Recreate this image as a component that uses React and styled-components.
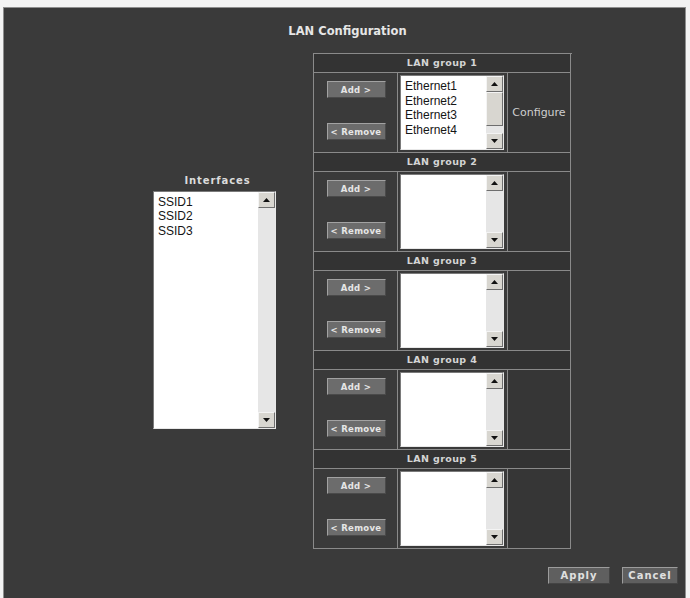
import React from 'react';
import styled, { createGlobalStyle } from 'styled-components';

const GlobalStyle = createGlobalStyle`
    body {
        margin: 0;
        background: #f3f3f3;
        font-family: "DejaVu Sans", Verdana, sans-serif;
    }
`;

const Page = styled.div`
    height: 598px;
    box-sizing: border-box;
    padding: 7px 4px 0 3px;
`;

const Panel = styled.div`
    height: 591px;
    box-sizing: border-box;
    display: flex;
    flex-direction: column;
    background: #3a3a3a;
    border: 1px solid #8e8e8e;
    border-bottom: none;
`;

const Title = styled.div`
    padding: 16px 0 0 6px;
    text-align: center;
    font-size: 11.5px;
    line-height: 14px;
    font-weight: bold;
    color: #e6e6e6;
`;

const Content = styled.div`
    display: flex;
    align-items: center;
    gap: 37px;
    margin-top: 15px;
    padding-left: 149px;
`;

const InterfaceColumn = styled.div`
    display: flex;
    flex-direction: column;
    align-items: center;
    width: 123px;
`;

const Label = styled.div`
    font-size: 10px;
    line-height: 14px;
    font-weight: bold;
    letter-spacing: 0.9px;
    color: #dcdcdc;
    margin: 0 0 3px 6px;
`;

const ListBox = styled.div`
    display: flex;
    box-sizing: border-box;
    width: ${p => p.$width}px;
    height: ${p => p.$height}px;
    background: #fff;
    border: 1px solid;
    border-color: #7a7a7a #e8e8e8 #e8e8e8 #7a7a7a;
`;

const Items = styled.div`
    flex: 1;
    padding: 3px 0 0 4px;
    font-family: "Liberation Sans", Arial, sans-serif;
    font-size: 12px;
    line-height: 14.5px;
    color: #151515;
    overflow: hidden;
`;

const ScrollBar = styled.div`
    display: flex;
    flex-direction: column;
    width: 17px;
    background: #e6e6e6;
`;

const Bevel = styled.div`
    box-sizing: border-box;
    background: #d8d6d0;
    border: 1px solid;
    border-color: #f4f4f4 #6e6e6e #6e6e6e #f4f4f4;
`;

const ArrowButton = styled(Bevel)`
    height: 16px;
    display: flex;
    align-items: center;
    justify-content: center;
`;

const Thumb = styled(Bevel)`
    height: ${p => p.$size}px;
`;

const Track = styled.div`
    flex: 1;
`;

const GroupTable = styled.div`
    width: 258px;
    border-top: 1px solid #8a8a8a;
    border-left: 1px solid #8a8a8a;
`;

const Group = styled.div`
    display: grid;
    grid-template-columns: 84px 110px 63px;
    grid-template-rows: 19px 80px;

    & > * {
        box-sizing: border-box;
        border-right: 1px solid #8a8a8a;
        border-bottom: 1px solid #8a8a8a;
    }
`;

const GroupHeader = styled.div`
    grid-column: 1 / 4;
    background: #333;
    text-align: center;
    font-size: 9.5px;
    line-height: 18px;
    font-weight: bold;
    letter-spacing: 0.4px;
    color: #d4d4d4;
`;

const ButtonCell = styled.div`
    display: flex;
    flex-direction: column;
    align-items: center;
    gap: 25px;
    padding: 8px 0 0 1px;
`;

const SmallButton = styled.button`
    width: 59px;
    height: 17px;
    padding: 0;
    background: #6c6c6c;
    border: 1px solid;
    border-color: #a2a2a2 #4a4a4a #4a4a4a #a2a2a2;
    color: #e6e6e6;
    font-family: "DejaVu Sans", Verdana, sans-serif;
    font-size: 8.5px;
    font-weight: bold;
    letter-spacing: 0.3px;
`;

const ListCell = styled.div`
    padding: 2px 3px 2px 2px;
`;

const ConfigureCell = styled.div`
    display: flex;
    align-items: center;
    justify-content: center;
    background: #363636;
    font-size: 11px;
    color: #cfcfcf;
`;

const Footer = styled.div`
    display: flex;
    justify-content: flex-end;
    gap: 12px;
    margin-top: 18px;
    padding-right: 7px;
`;

const ActionButton = styled.button`
    width: ${p => p.$width}px;
    height: 17px;
    padding: 0;
    background: #5f5f5f;
    border: 1px solid;
    border-color: #9c9c9c #444 #444 #9c9c9c;
    color: #e0e0e0;
    font-family: "DejaVu Sans", Verdana, sans-serif;
    font-size: 10px;
    font-weight: bold;
    letter-spacing: 1px;
`;

const Arrow = ({ down }) => (
    <svg width="7" height="4" viewBox="0 0 7 4">
        <path d={down ? 'M0 0h7L3.5 4z' : 'M0 4h7L3.5 0z'} fill="#111" />
    </svg>
);

const Scroller = ({ thumb }) => (
    <ScrollBar>
        <ArrowButton><Arrow /></ArrowButton>
        {thumb ? <Thumb $size={thumb} /> : null}
        <Track />
        <ArrowButton><Arrow down /></ArrowButton>
    </ScrollBar>
);

const groups = [
    { name: 'LAN group 1', members: ['Ethernet1', 'Ethernet2', 'Ethernet3', 'Ethernet4'], configure: true },
    { name: 'LAN group 2', members: [] },
    { name: 'LAN group 3', members: [] },
    { name: 'LAN group 4', members: [] },
    { name: 'LAN group 5', members: [] },
];

const interfaces = ['SSID1', 'SSID2', 'SSID3'];

export default function App() {
    return (
        <Page>
            <GlobalStyle />
            <Panel>
                <Title>LAN Configuration</Title>
                <Content>
                    <InterfaceColumn>
                        <Label>Interfaces</Label>
                        <ListBox $width={123} $height={238}>
                            <Items>
                                {interfaces.map(i => <div key={i}>{i}</div>)}
                            </Items>
                            <Scroller />
                        </ListBox>
                    </InterfaceColumn>

                    <GroupTable>
                        {groups.map(g => (
                            <Group key={g.name}>
                                <GroupHeader>{g.name}</GroupHeader>
                                <ButtonCell>
                                    <SmallButton>Add &gt;</SmallButton>
                                    <SmallButton>&lt; Remove</SmallButton>
                                </ButtonCell>
                                <ListCell>
                                    <ListBox $width={104} $height={75}>
                                        <Items>
                                            {g.members.map(m => <div key={m}>{m}</div>)}
                                        </Items>
                                        <Scroller thumb={g.members.length > 3 ? 34 : 0} />
                                    </ListBox>
                                </ListCell>
                                <ConfigureCell>{g.configure ? 'Configure' : ''}</ConfigureCell>
                            </Group>
                        ))}
                    </GroupTable>
                </Content>

                <Footer>
                    <ActionButton $width={62}>Apply</ActionButton>
                    <ActionButton $width={56}>Cancel</ActionButton>
                </Footer>
            </Panel>
        </Page>
    );
}
